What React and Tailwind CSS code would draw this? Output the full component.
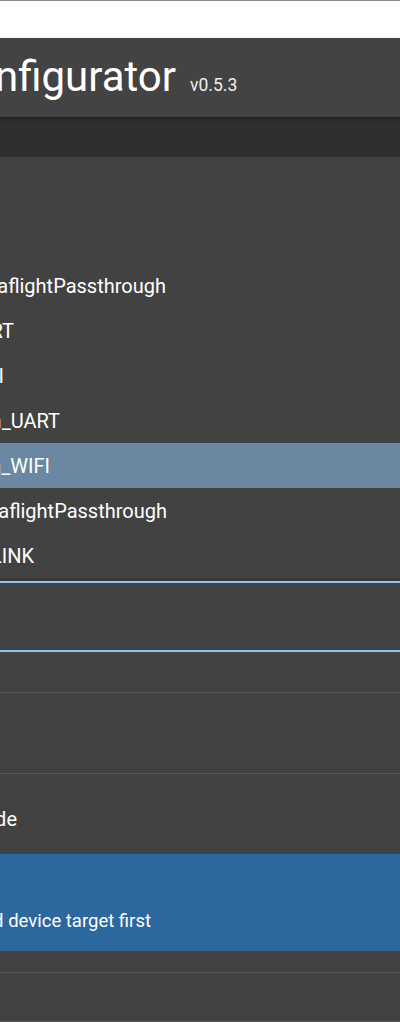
// App.jsx
// Cropped view of the configurator window: header, device target menu
// (open, one item selected), form fields and an info alert.

const targets = [
  { label: "DIY_2400_TX_ESP32_SX1280_Mini", end: "w-[0px]" },
  { label: "DIY_2400_TX_ESP32_SX1280_E28", end: "w-[0px]" },
  { label: "DIY_2400_TX_ESP32_SX1280_E28_via_BetaflightPassthrough", end: "w-[166px]" },
  { label: "DIY_2400_TX_ESP32_via_UART", end: "w-[14px]" },
  { label: "DIY_2400_TX_ESP32_via_WIFI", end: "w-[4px]" },
  { label: "Frsky_TX_R9M_via_UART", end: "w-[60px]" },
  { label: "Frsky_TX_R9M_via_WIFI", end: "w-[50px]", selected: true },
  { label: "Frsky_RX_R9MM_via_BetaflightPassthrough", end: "w-[167px]" },
  { label: "Frsky_RX_R9MM_via_STLINK", end: "w-[34px]" },
];

const MenuRow = ({ label, end, selected }) => (
  <div
    className={`flex h-[45px] shrink-0 items-center ${
      selected ? "bg-[#6a88a1]" : ""
    }`}
  >
    <div className={`flex shrink-0 justify-end whitespace-nowrap ${end}`}>
      <span className="text-[20px] leading-none">{label}</span>
    </div>
  </div>
);

const Divider = () => <div className="h-px shrink-0 bg-[#5a5a5a]" />;

export default function App() {
  return (
    <div className="flex min-h-[1022px] flex-col overflow-hidden bg-[#424242] font-[Roboto,sans-serif] text-white">
      {/* browser strip */}
      <div className="h-[38px] shrink-0 border-t border-[#8c8c8c] bg-white" />

      {/* Header */}
      <header className="relative z-10 flex h-[79px] shrink-0 items-baseline bg-[#434343] pt-[18px] shadow-[0_2px_4px_rgba(0,0,0,0.35)]">
        <div className="flex w-[176px] shrink-0 justify-end whitespace-nowrap">
          <h1 className="text-[42px] font-normal leading-none">
            ExpressLRS Configurator
          </h1>
        </div>
        <span className="ml-[14px] text-[17.5px] leading-none text-[#eeeeee]">
          v0.5.3
        </span>
      </header>

      {/* sub bar */}
      <div className="h-[40px] shrink-0 bg-[#2f2f2f]" />

      {/* Device target menu */}
      <div className="flex shrink-0 flex-col pt-[16px]">
        {targets.map((t) => (
          <MenuRow key={t.label} {...t} />
        ))}
      </div>
      <div className="h-[3px] shrink-0 bg-[#373737]" />
      <div className="h-[2px] shrink-0 bg-[#90c2ec]" />

      {/* field */}
      <div className="h-[67px] shrink-0" />
      <div className="h-[2px] shrink-0 bg-[#90c2ec]" />

      <div className="h-[40px] shrink-0" />
      <Divider />
      <div className="h-[80px] shrink-0" />
      <Divider />

      {/* mode */}
      <div className="flex h-[80px] shrink-0 items-center pt-[10px]">
        <div className="flex w-[17px] shrink-0 justify-end whitespace-nowrap">
          <span className="text-[20px] leading-none">Flashing mode</span>
        </div>
      </div>

      {/* info alert */}
      <div className="flex h-[97px] shrink-0 flex-col justify-end bg-[#2c689e] pb-[21px]">
        <div className="flex w-[151px] shrink-0 justify-end whitespace-nowrap">
          <span className="text-[18.5px] leading-none">
            Please select a build device target first
          </span>
        </div>
      </div>

      <div className="h-[21px] shrink-0" />
      <Divider />
      <div className="h-[48px] shrink-0" />
      <Divider />
    </div>
  );
}
